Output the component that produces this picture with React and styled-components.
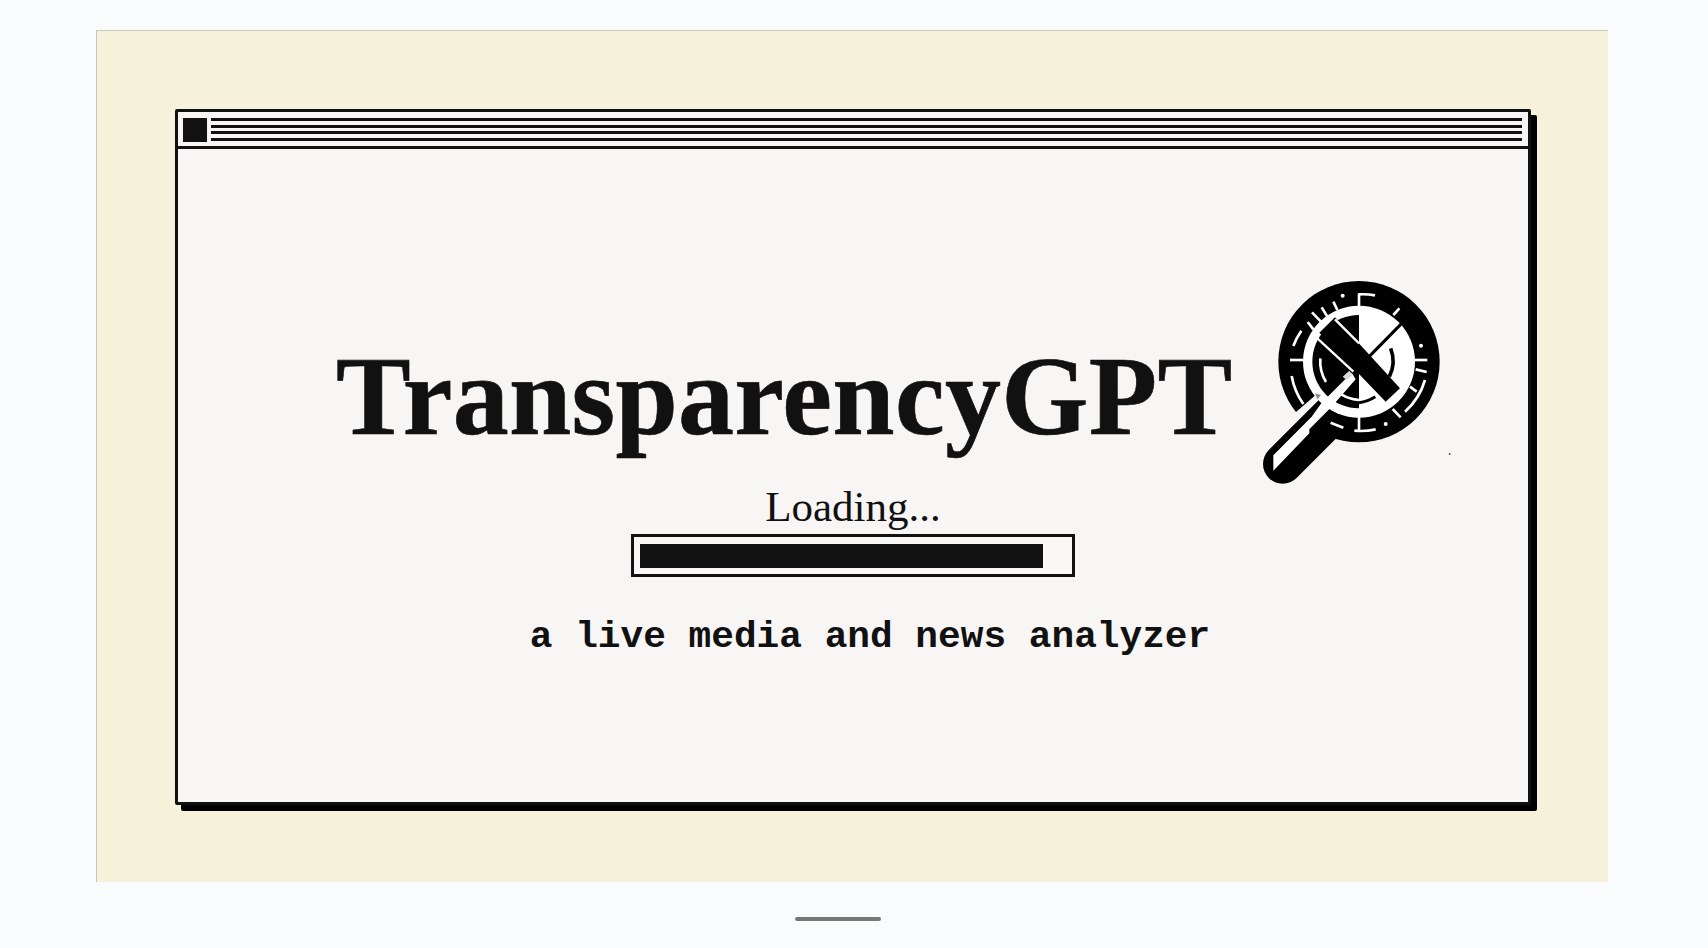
import React from 'react'
import styled, { createGlobalStyle } from 'styled-components'

const BG = '#f7f6f4'

const GlobalStyle = createGlobalStyle`
  html, body { margin: 0; padding: 0; background: #fafbfd; }
  body { height: 948px; overflow: hidden; font-family: "Liberation Serif", serif; color: #111; }
`

const Page = styled.div`
  display: flex;
  flex-direction: column;
  align-items: flex-start;
  height: 948px;
  padding: 30px 0 0 96px;
  box-sizing: border-box;
`
const Panel = styled.main`
  width: 1512px;
  height: 852px;
  box-sizing: border-box;
  padding: 78px 0 0 78px;
  background: #f6f1da;
  border-top: 1px solid #c6c6c4;
  border-left: 1px solid #c6c6c4;
`
const Window = styled.section`
  width: 1356px;
  height: 696px;
  box-sizing: border-box;
  display: flex;
  flex-direction: column;
  background: ${BG};
  border: 3px solid #111;
  border-radius: 2px;
  box-shadow: 6px 6px 0 #000;
`
const TitleBar = styled.header`
  display: flex;
  align-items: flex-start;
  gap: 4px;
  height: 37px;
  box-sizing: border-box;
  padding: 6px 6px 0 5px;
  border-bottom: 3px solid #111;
`
const CloseBox = styled.div`
  width: 24px;
  height: 24px;
  background: #111;
  flex-shrink: 0;
`
const Stripes = styled.div`
  flex: 1;
  display: flex;
  flex-direction: column;
  gap: 3.5px;
`
const Stripe = styled.div`
  height: 3px;
  background: #111;
`
const Body = styled.div`
  flex: 1;
  display: flex;
  flex-direction: column;
  align-items: center;
  padding-top: 111px;
`
const Hero = styled.div`
  align-self: flex-start;
  display: flex;
  align-items: center;
  gap: 8px;
  height: 225px;
  padding-left: 158px;
`
const Title = styled.h1`
  margin: 0;
  padding-top: 46px;
  font-size: 112px;
  line-height: 1;
  font-weight: 700;
  letter-spacing: 0.3px;
  -webkit-text-stroke: 0.6px #111;
  white-space: nowrap;
`
const Loading = styled.div`
  font-size: 43px;
  line-height: 43px;
  margin-bottom: 6px;
`
const Track = styled.div`
  width: 444px;
  height: 43px;
  box-sizing: border-box;
  padding: 7px 6px 6px;
  border: 3px solid #111;
  background: #f9f8f6;
`
const Fill = styled.div`
  width: ${(p) => p.$width}px;
  height: 24px;
  background: #111;
`
const Tagline = styled.p`
  margin: 38px 0 0 34px;
  font-family: "Liberation Mono", monospace;
  font-weight: 700;
  font-size: 37.8px;
  line-height: 44px;
  white-space: nowrap;
`
const HomeBar = styled.div`
  width: 86px;
  height: 4px;
  margin: 35px 0 0 699px;
  border-radius: 2px;
  background: #777876;
`
const LogoSvg = styled.svg`
  flex-shrink: 0;
  overflow: visible;
`

const Logo = () => (
  <LogoSvg width="240" height="225" viewBox="0 0 720 675">
    {/* lens and the gap it leaves next to the handle */}
    <circle cx="357" cy="305" r="242" fill="#000" />
    <polygon points="60,500 168,456 235,398 250,425 120,560" fill={BG} />
    <line x1="128" y1="612" x2="305" y2="435" stroke="#000" strokeWidth="118" strokeLinecap="round" />

    {/* dial, black on the left half */}
    <circle cx="357" cy="305" r="168" fill="#fff" />
    <path d="M357 165 A140 140 0 0 0 357 445 Z" fill="#000" />

    {/* handle core */}
    <polygon points="100,632 100,586 215,470 245,428 335,338 347,358 275,440 208,508 208,520" fill="#fff" />
    <path d="M225 400 L243 405 L232 418 Z" fill="#8a8a8a" />
    <path d="M308 350 L328 332 L338 345 L320 360 Z" fill="#d9d9d9" />

    <g fill="none" stroke="#fff" strokeWidth="8">
      <path d="M241 295 A118 118 0 0 0 258 366" />
      <path d="M305 404 A115 115 0 0 0 357 420" />
    </g>
    <g fill="none" stroke="#000">
      <path d="M452 265 A105 105 0 0 1 448 350" strokeWidth="11" />
      <path d="M357 428 A125 125 0 0 0 406 410" strokeWidth="9" />
    </g>

    {/* thin blade with its end cap */}
    <g stroke="#000" fill="none" strokeWidth="9">
      <path d="M385 292 L497 178" />
      <path d="M497 170 L534 208 L512 228" />
    </g>

    {/* crossing bar */}
    <polygon points="238,218 285,172 480,385 437,425" fill="#000" />
    <path d="M232 235 L340 335" stroke="#fff" strokeWidth="7" />
    <path d="M285 178 L357 250" stroke="#fff" strokeWidth="7" />

    {/* ticks on the outer ring */}
    <g fill="none" stroke="#fff" strokeWidth="8">
      <path d="M357 100 V140" />
      <path d="M357 103 A205 205 0 0 1 405 106" />
      <path d="M150 300 H190" />
      <path d="M525 300 H562" />
      <path d="M527 328 L560 336" />
      <path d="M357 470 V510" />
      <path d="M343 512 A205 205 0 0 0 407 508" />
      <path d="M160 258 A205 205 0 0 1 184 212" />
      <path d="M155 348 A205 205 0 0 0 190 432" />
      <path d="M495 455 A205 205 0 0 0 555 360" />
      <path d="M510 380 L530 395" />
      <path d="M203 186 L220 208" />
      <path d="M216 157 L245 187" />
      <path d="M245 142 L262 170" />
      <path d="M280 125 L292 150" />
      <path d="M460 165 L478 145" />
      <path d="M458 447 L482 472" />
      <path d="M272 488 L310 503" />
    </g>
    <g fill="#fff">
      <circle cx="308" cy="107" r="6" />
      <circle cx="543" cy="257" r="6" />
      <circle cx="437" cy="492" r="6" />
    </g>
    <circle cx="629" cy="582" r="3" fill="#555" />
  </LogoSvg>
)

export default function App() {
  return (
    <>
      <GlobalStyle />
      <Page>
        <Panel>
          <Window>
            <TitleBar>
              <CloseBox />
              <Stripes>
                <Stripe />
                <Stripe />
                <Stripe />
                <Stripe />
              </Stripes>
            </TitleBar>
            <Body>
              <Hero>
                <Title>TransparencyGPT</Title>
                <Logo />
              </Hero>
              <Loading>Loading...</Loading>
              <Track>
                <Fill $width={403} />
              </Track>
              <Tagline>a live media and news analyzer</Tagline>
            </Body>
          </Window>
        </Panel>
        <HomeBar />
      </Page>
    </>
  )
}
